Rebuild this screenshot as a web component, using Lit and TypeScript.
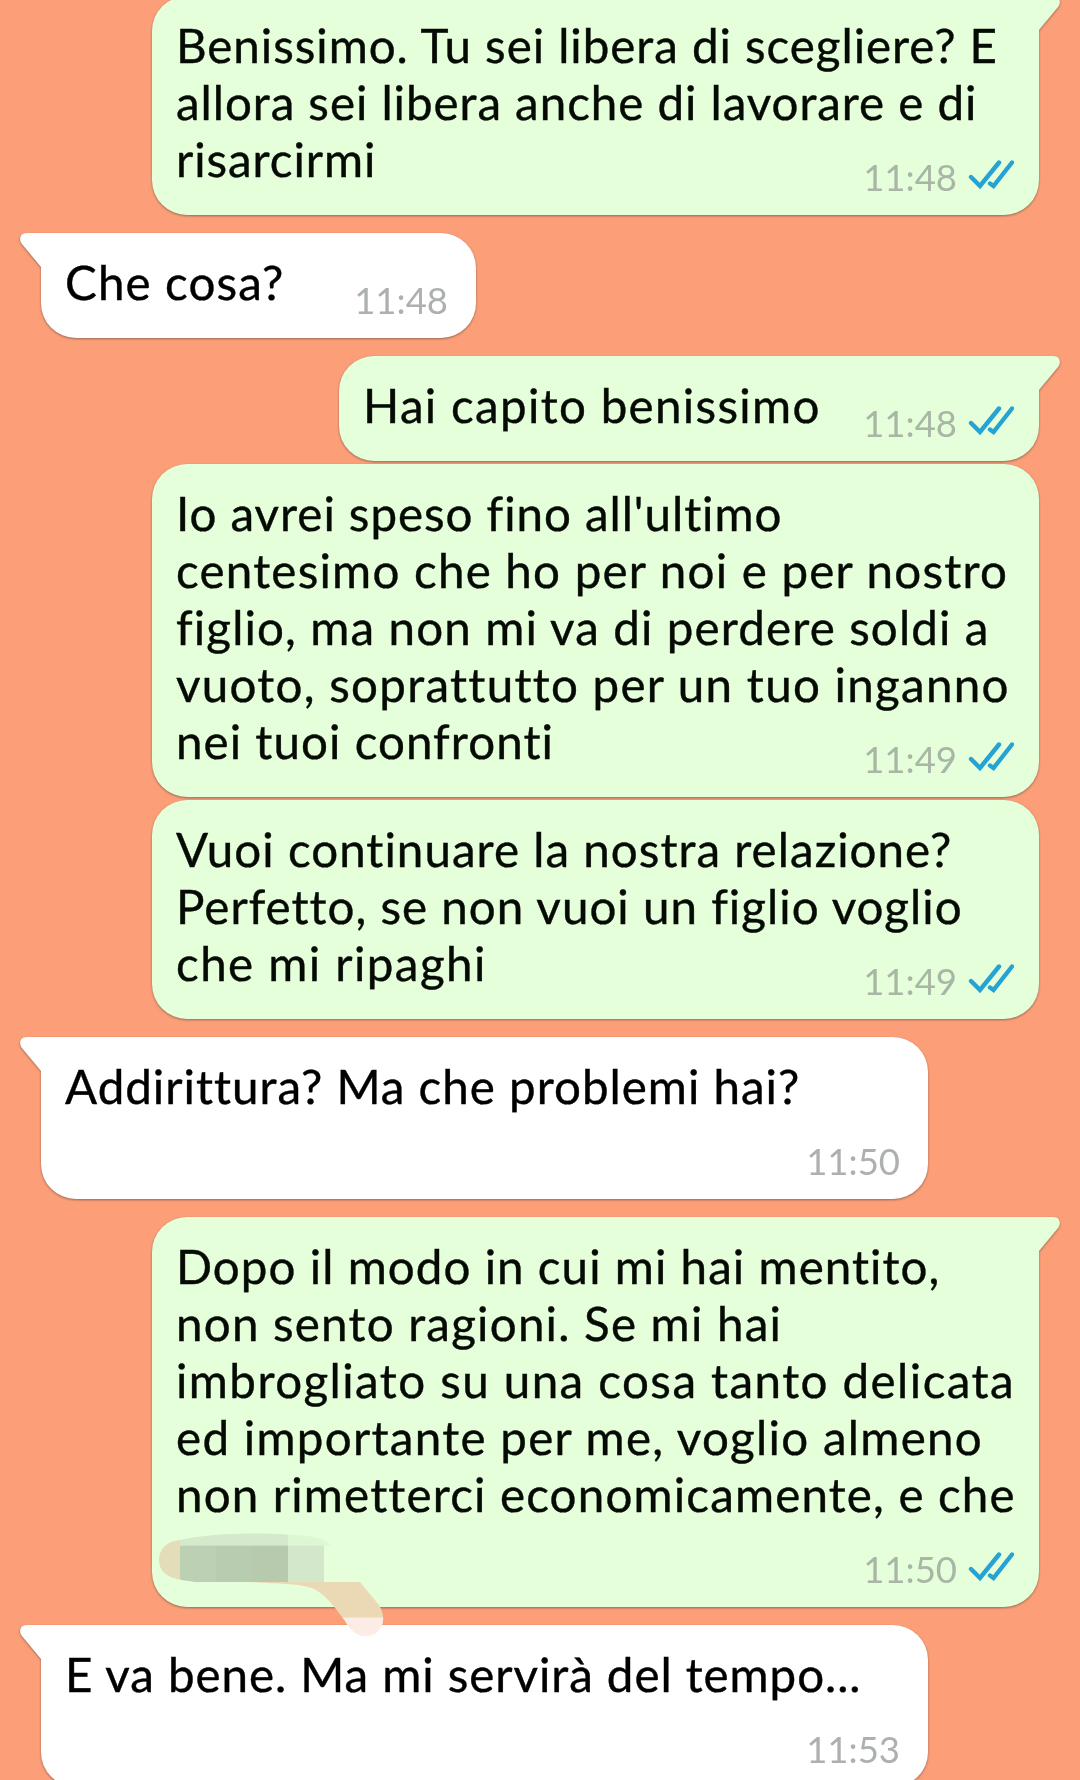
import { LitElement, html, css, svg, nothing } from 'lit';
import { customElement, property } from 'lit/decorators.js';
import { classMap } from 'lit/directives/class-map.js';
import { styleMap } from 'lit/directives/style-map.js';

interface Line {
  text: string;
  width: number;
}

interface Message {
  side: 'in' | 'out';
  time: string;
  lines: Line[];
  size: 'full' | 'medium' | 'small';
  tail?: boolean;
  spaced?: boolean;
  extraRow?: boolean;
  smudge?: boolean;
}

const FONT = '47.5px Lato, "Noto Sans", sans-serif';

const MESSAGES: Message[] = [
  {
    side: 'out', time: '11:48', size: 'full', tail: true,
    lines: [
      { text: 'Benissimo. Tu sei libera di scegliere? E', width: 817 },
      { text: 'allora sei libera anche di lavorare e di', width: 797 },
      { text: 'risarcirmi', width: 194 },
    ],
  },
  {
    side: 'in', time: '11:48', size: 'small', tail: true, spaced: true,
    lines: [{ text: 'Che cosa?', width: 215 }],
  },
  {
    side: 'out', time: '11:48', size: 'medium', tail: true, spaced: true,
    lines: [{ text: 'Hai capito benissimo', width: 450.5 }],
  },
  {
    side: 'out', time: '11:49', size: 'full',
    lines: [
      { text: "Io avrei speso fino all'ultimo", width: 599.5 },
      { text: 'centesimo che ho per noi e per nostro', width: 829 },
      { text: 'figlio, ma non mi va di perdere soldi a', width: 810 },
      { text: 'vuoto, soprattutto per un tuo inganno', width: 831.5 },
      { text: 'nei tuoi confronti', width: 371.5 },
    ],
  },
  {
    side: 'out', time: '11:49', size: 'full',
    lines: [
      { text: 'Vuoi continuare la nostra relazione?', width: 774 },
      { text: 'Perfetto, se non vuoi un figlio voglio', width: 782 },
      { text: 'che mi ripaghi', width: 305 },
    ],
  },
  {
    side: 'in', time: '11:50', size: 'full', tail: true, spaced: true, extraRow: true,
    lines: [{ text: 'Addirittura? Ma che problemi hai?', width: 733 }],
  },
  {
    side: 'out', time: '11:50', size: 'full', tail: true, spaced: true, extraRow: true, smudge: true,
    lines: [
      { text: 'Dopo il modo in cui mi hai mentito,', width: 757.5 },
      { text: 'non sento ragioni. Se mi hai', width: 599.5 },
      { text: 'imbrogliato su una cosa tanto delicata', width: 833 },
      { text: 'ed importante per me, voglio almeno', width: 805 },
      { text: 'non rimetterci economicamente, e che', width: 834.5 },
    ],
  },
  {
    side: 'in', time: '11:53', size: 'full', tail: true, spaced: true, extraRow: true,
    lines: [{ text: 'E va bene. Ma mi servirà del tempo...', width: 790.5 }],
  },
];

const ruler = document.createElement('canvas').getContext('2d')!;

// Tracking that makes the visible part of a line as wide as asked.
function tracking(line: Line): string {
  const gaps = line.text.length - 1;
  ruler.font = FONT;
  // a non-zero spacing keeps ligatures off, as in the rendered line
  ruler.letterSpacing = '1px';
  const m = ruler.measureText(line.text);
  const ink = m.actualBoundingBoxRight + m.actualBoundingBoxLeft - gaps;
  return `${((line.width - ink) / gaps).toFixed(3)}px`;
}

@customElement('chat-bubble')
export class ChatBubble extends LitElement {
  static override styles = css`
    :host {
      display: block;
    }

    .bubble {
      position: relative;
      box-sizing: border-box;
      padding: 21px 24px 27px;
      border-radius: 35px;
      background: #e5ffdb;
      color: #050b04;
      filter: drop-shadow(0 1px 1px rgb(70 60 50 / 55%));
    }

    .full { width: 887px; }
    .medium { width: 700px; }
    .small { width: 435px; }

    .in {
      background: #fff;
      border-top-left-radius: 0;
      color: #000;
    }

    .out.tailed {
      border-top-right-radius: 0;
    }

    .line {
      height: 57px;
      font: 47.5px/57px Lato, "Noto Sans", sans-serif;
      font-kerning: normal;
      text-rendering: geometricPrecision;
      -webkit-text-stroke: 0.4px currentColor;
      white-space: pre;
    }

    .meta {
      position: absolute;
      right: 25px;
      bottom: 18px;
      display: flex;
      align-items: center;
      gap: 11px;
      font: 36.5px/40px Lato, "Noto Sans", sans-serif;
      color: #a9b6a5;
    }

    .in .meta {
      right: 28px;
      color: #adb0b0;
    }

    .ticks {
      width: 46px;
      height: 32px;
      margin-top: -5px;
    }

    .tail {
      position: absolute;
      top: 0;
      width: 23px;
      height: 36px;
    }

    .in .tail {
      left: -21px;
      fill: #fff;
    }

    .out .tail {
      right: -21px;
      fill: #e5ffdb;
      transform: scaleX(-1);
    }
  `;

  @property({ attribute: false }) message!: Message;

  override render() {
    const m = this.message;
    return html`
      <div class=${classMap({ bubble: true, [m.side]: true, [m.size]: true, tailed: !!m.tail })}>
        ${m.tail ? html`
          <svg class="tail" viewBox="0 0 23 36"><path d="M23 0H6.500C0.500 0-1.500 6 1.500 10.500L21 34V36H23Z" /></svg>
        ` : nothing}
        ${m.lines.map((line) => html`<div class="line" style=${styleMap({ letterSpacing: tracking(line) })}>${line.text}</div>`)}
        ${m.extraRow ? html`<div class="line"></div>` : nothing}
        <div class="meta">
          <span>${m.time}</span>
          ${m.side === 'out' ? html`
            <svg class="ticks" viewBox="0 0 46 32" fill="none" stroke="#25a3d3" stroke-width="4.400" stroke-linecap="round" stroke-linejoin="miter">
              <path d="M3 18L12 27L31 3.500M22 24.500L25.500 27L44 3.500" />
            </svg>
          ` : nothing}
        </div>
      </div>
    `;
  }
}

@customElement('app-root')
export class AppRoot extends LitElement {
  static override styles = css`
    :host {
      display: block;
      height: 1780px;
      overflow: hidden;
      background: #fc9e78;
    }

    .chat {
      display: flex;
      flex-direction: column;
      gap: 3px;
      padding: 0 41px;
      margin-top: -4px;
    }

    .row {
      position: relative;
      align-self: flex-start;
    }

    .out {
      align-self: flex-end;
    }

    .spaced {
      margin-top: 15px;
    }

    .smudge {
      position: absolute;
      z-index: 1;
      left: 0;
      bottom: -33px;
      width: 240px;
      height: 110px;
    }
  `;

  private renderSmudge() {
    return svg`
      <svg class="smudge" viewBox="152 1530 240 110">
        <defs>
          <clipPath id="stroke">
            <path d="M159 1560C159 1549 167 1541 180 1540C215 1532 278 1532 314 1537C330 1540 338 1550 340 1565L360 1582L379 1605C390 1624 377 1636 367 1636C357 1637 350 1630 345 1621C335 1607 323 1592 312 1588C295 1583 275 1584 250 1582H196C181 1580 159 1579 159 1560Z" />
          </clipPath>
        </defs>
        <g clip-path="url(#stroke)">
          <rect x="152" y="1530" width="28" height="52" fill="#e3ddba" />
          <rect x="180" y="1530" width="108" height="15.500" fill="#d4eacb" />
          <rect x="288" y="1530" width="44" height="15.500" fill="#def7d3" />
          <rect x="180" y="1545.500" width="36" height="36.500" fill="#bcd1b4" />
          <rect x="216" y="1545.500" width="36" height="36.500" fill="#b8cdb0" />
          <rect x="252" y="1545.500" width="36" height="36.500" fill="#b7caae" />
          <rect x="288" y="1545.500" width="36" height="36.500" fill="#d3e8ca" />
          <rect x="240" y="1582" width="150" height="36" fill="#ebd9b5" />
          <rect x="324" y="1617.500" width="66" height="22" fill="#fcece6" />
        </g>
      </svg>
    `;
  }

  override render() {
    return html`
      <div class="chat">
        ${MESSAGES.map((m) => html`
          <div class=${classMap({ row: true, out: m.side === 'out', spaced: !!m.spaced })}>
            <chat-bubble .message=${m}></chat-bubble>
            ${m.smudge ? this.renderSmudge() : nothing}
          </div>
        `)}
      </div>
    `;
  }
}
